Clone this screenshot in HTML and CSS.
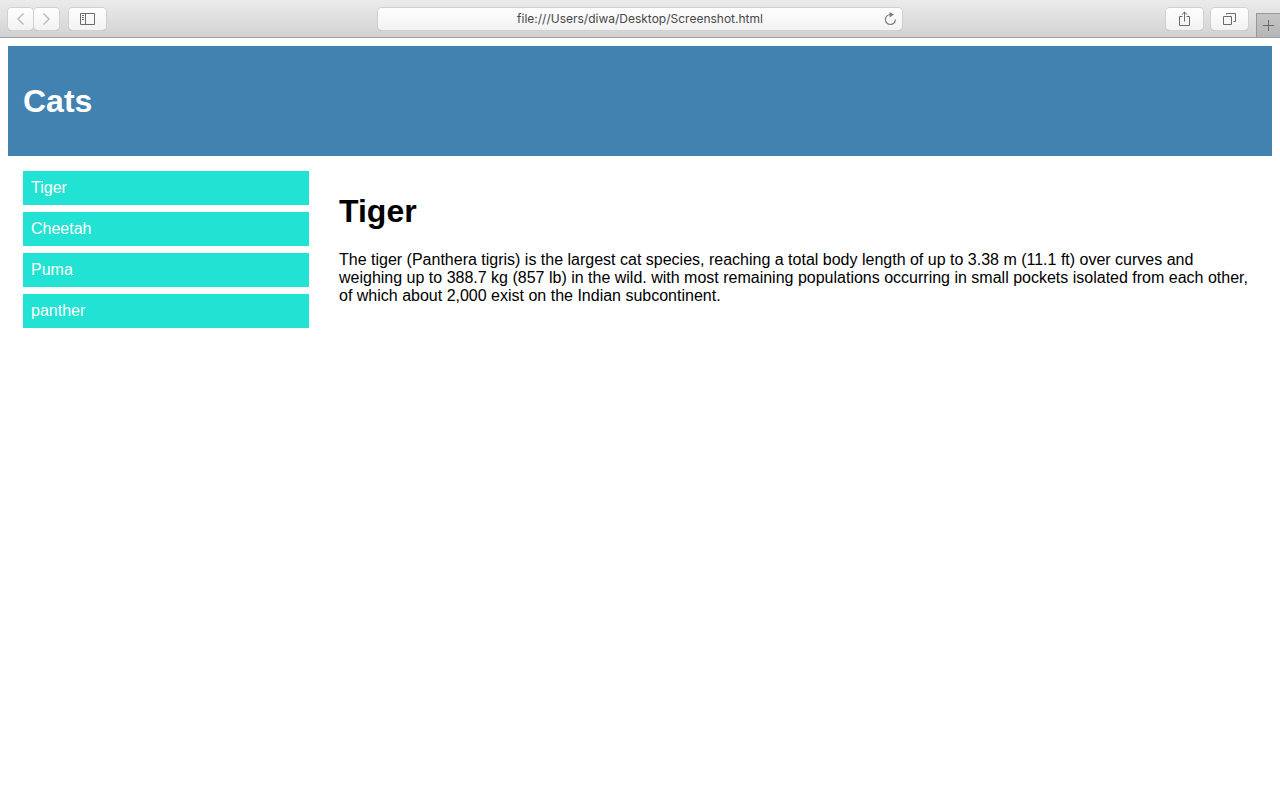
FILE: index.html
```html
<!DOCTYPE html>
<html lang="en">
<head>
<meta charset="utf-8">
<meta name="viewport" content="width=device-width, initial-scale=1">
<title>Cats</title>
<link rel="stylesheet" href="styles.css">
</head>
<body>
<div class="toolbar">
  <div class="tools tools-left">
    <div class="history">
      <button class="tool tool-nav" type="button" aria-label="Back"><svg width="7" height="12" viewBox="0 0 7 12"><path d="M6.5.5 1 6l5.5 5.5"/></svg></button>
      <button class="tool tool-nav" type="button" aria-label="Forward"><svg width="7" height="12" viewBox="0 0 7 12"><path d="M.5.5 6 6 .5 11.5"/></svg></button>
    </div>
    <button class="tool" type="button" aria-label="Show sidebar"><svg width="15" height="12" viewBox="0 0 15 12"><path d="M.5.5h14v11H.5zM5.5.5v11M2 2.5h2M2 4.5h2M2 6.5h2"/></svg></button>
  </div>
  <form class="address">
    <input class="address-input" type="text" aria-label="Address" value="file:///Users/diwa/Desktop/Screenshot.html">
    <button class="reload" type="button" aria-label="Reload"><svg width="12" height="14" viewBox="0 0 12 14"><path d="M6.500 2.500A5 5 0 1 0 11.400 7.500"/><path class="solid" d="M5.500 0 10 2.600 5.500 5.400z"/></svg></button>
  </form>
  <div class="tools tools-right">
    <button class="tool" type="button" aria-label="Share"><svg width="11" height="16" viewBox="0 0 11 16"><path d="M3.5 5.500h-3v9h10v-9h-3M5.500 10.500V1M2.800 3.700 5.500 1l2.700 2.700"/></svg></button>
    <button class="tool" type="button" aria-label="Show all tabs"><svg width="13" height="12" viewBox="0 0 13 12"><path d="M.5 3.500h8v8h-8zM3.500 1.500v-1h9v8h-2"/></svg></button>
    <button class="new-tab" type="button" aria-label="New tab"><svg width="11" height="11" viewBox="0 0 11 11"><path d="M5.500 0v11M0 5.500h11"/></svg></button>
  </div>
</div>
<div class="page">
  <header class="header"><h1 class="title">Cats</h1></header>
  <div class="row">
    <nav class="menu">
      <ul class="menu-list">
        <li><a class="menu-link" href="#tiger">Tiger</a></li>
        <li><a class="menu-link" href="#cheetah">Cheetah</a></li>
        <li><a class="menu-link" href="#puma">Puma</a></li>
        <li><a class="menu-link" href="#panther">panther</a></li>
      </ul>
    </nav>
    <main class="content" id="tiger">
      <h1 class="title">Tiger</h1>
      <p class="text">The tiger (Panthera tigris) is the largest cat species, reaching a total body length of up to 3.38 m (11.1 ft) over curves and weighing up to 388.7 kg (857 lb) in the wild. with most remaining populations occurring in small pockets isolated from each other, of which about 2,000 exist on the Indian subcontinent.</p>
    </main>
  </div>
</div>
</body>
</html>
```
FILE: styles.css
```css
* {
  box-sizing: border-box;
}

body {
  margin: 0;
  background: #fff;
  color: #000;
  font: 16px/18px "Liberation Sans", Helvetica, Arial, sans-serif;
}

svg {
  display: block;
  fill: none;
  stroke: #6b6b6b;
}

/* Browser toolbar */
.toolbar {
  display: grid;
  grid-template-columns: 1fr 41% 1fr;
  height: 38px;
  background: linear-gradient(#ebebeb, #d2d2d2);
  border-bottom: 1px solid #a0a0a0;
}

.tools {
  display: flex;
  align-items: flex-start;
  gap: 8px;
}

.tools-left {
  gap: 10px;
  padding: 8px 0 0 8px;
}

.tools-right {
  justify-content: flex-end;
  padding-top: 8px;
}

.history {
  display: flex;
  gap: 1px;
}

.tool,
.address {
  background: linear-gradient(#fefefe, #f2f2f2);
  border-radius: 4px;
  box-shadow: 0 0 0 1px #d0d0d0, 0 1px 0 #a8a8a8;
}

.tool {
  display: flex;
  align-items: center;
  justify-content: center;
  width: 37px;
  height: 22px;
  padding: 0;
  border: 0;
}

.tool-nav {
  width: 25px;
}

.tool-nav svg {
  stroke: #bcbcbc;
  stroke-width: 1.5;
}

.address {
  display: flex;
  height: 22px;
  margin: 8px 0 0;
}

.address-input {
  flex: 1;
  min-width: 0;
  padding: 0 0 0 24px;
  border: 0;
  outline: 0;
  background: none;
  color: #484848;
  font: 12px/22px Inter, "Liberation Sans", sans-serif;
  text-align: center;
}

.reload {
  display: flex;
  align-items: center;
  justify-content: center;
  width: 24px;
  padding: 0;
  border: 0;
  background: none;
}

.reload svg {
  stroke: #7c7c7c;
  stroke-width: 1.2;
}

.reload .solid {
  fill: #7c7c7c;
  stroke: none;
}

.new-tab {
  display: flex;
  align-items: center;
  justify-content: center;
  align-self: flex-end;
  width: 24px;
  height: 24px;
  padding: 0;
  border: solid #999;
  border-width: 1px 0 0 1px;
  background: linear-gradient(#c4c4c4, #b6b6b6);
}

/* Page */
.page {
  margin: 8px;
}

.header {
  display: flow-root;
  padding: 15px;
  background: #4182b1;
  color: #fff;
}

.title {
  margin: 22px 0;
  font-size: 32px;
  line-height: 36px;
}

.row {
  display: flex;
}

.menu {
  flex: 0 0 25%;
  padding: 15px;
}

.menu-list {
  display: grid;
  gap: 7px;
  margin: 0;
  padding: 0;
  list-style: none;
}

.menu-link {
  display: block;
  padding: 8px;
  background: #22e2d4;
  color: #fff;
  text-decoration: none;
}

.content {
  flex: 1;
  padding: 15px;
}

.text {
  margin: 0;
}
```
